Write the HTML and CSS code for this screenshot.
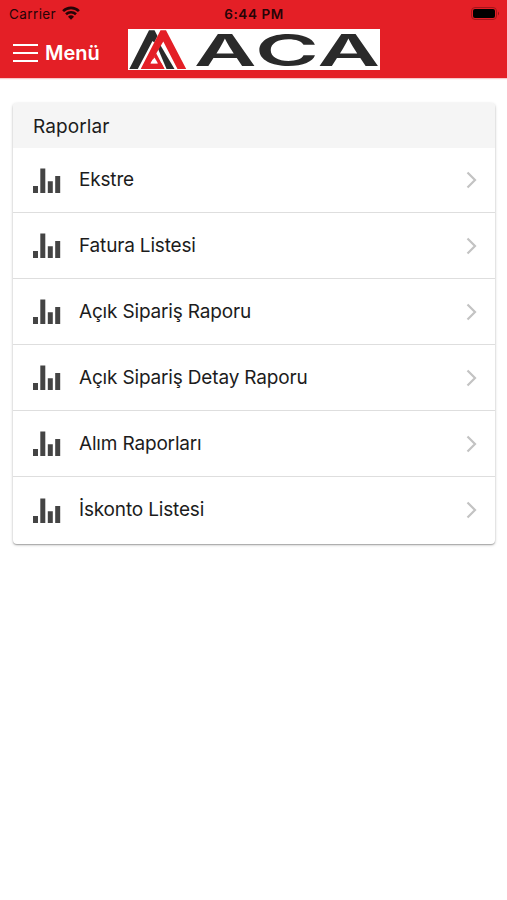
FILE: index.html
```html
<!DOCTYPE html>
<html lang="tr">
<head>
<meta charset="utf-8">
<title>Raporlar</title>
<link rel="stylesheet" href="styles.css">
</head>
<body>
<svg width="0" height="0" class="defs" aria-hidden="true">
  <symbol id="bars" viewBox="0 0 28 26"><path d="M0 18h5v7H0zM7.300 .5h5v24.500h-5zM14.800 13.200h5v11.800h-5zM22.200 8h5v17h-5z" fill="#444"/></symbol>
  <symbol id="chevron" viewBox="0 0 12 18"><path d="M1.500 1.500 9 9l-7.500 7.500" fill="none" stroke="#c3c3c3" stroke-width="2.200"/></symbol>
</svg>
<header class="topbar">
  <div class="status">
    <div class="carrier"><span>Carrier</span>
      <svg class="wifi" width="18" height="14" viewBox="0 0 18 14"><path d="M1.100 5.100a11.200 11.200 0 0 1 15.800 0M4 8.200a7.200 7.200 0 0 1 10 0" fill="none" stroke="#260407" stroke-width="2.600"/><path d="m9 13.800-3-3a4.300 4.300 0 0 1 6 0z" fill="#260407"/></svg>
    </div>
    <div class="time">6:44 PM</div>
    <svg class="battery" width="30" height="14" viewBox="0 0 30 14"><rect x=".5" y=".5" width="25" height="12" rx="3.500" fill="none" stroke="#a3151b"/><rect x="2" y="2" width="22" height="9" rx="2" fill="#000"/><path d="M27 4.500q2 2 0 4z" fill="#8c1217"/></svg>
  </div>
  <div class="nav">
    <svg class="burger" width="25" height="20" viewBox="0 0 25 20"><path d="M0 2h25M0 10h25M0 18h25" stroke="#fff" stroke-width="2.200"/></svg>
    <span class="menu">Menü</span>
    <svg class="logo" width="252" height="41" viewBox="0 0 252 41">
      <rect width="252" height="41" fill="#fff"/>
      <path d="M1.300 40 21 1.300h5.500L29.500 7 26.300 13.500 24.500 12 9.800 40z" fill="#2a2a2a"/>
      <path d="M29.500 18.500 32 15.500 46.500 40H38.500z" fill="#2a2a2a"/>
      <path d="M12.700 40 32.500 1.300H38L58.200 40h-8.700L35.300 12.500 22.500 34.300h11L36.500 40z" fill="#e41f26"/>
      <path d="m25 29.500 3-5.500 8.500 16H33z" fill="#e41f26"/>
      <path d="M26.500 28.500 22.500 34.500h7.500z" fill="#fff"/>
      <g class="wordmark">
        <text x="66" y="36.500" textLength="62.500" lengthAdjust="spacingAndGlyphs">A</text>
        <text x="127" y="36.500" textLength="64" lengthAdjust="spacingAndGlyphs">C</text>
        <text x="189.500" y="36.500" textLength="62.500" lengthAdjust="spacingAndGlyphs">A</text>
      </g>
    </svg>
  </div>
</header>
<main class="card">
  <h1 class="title">Raporlar</h1>
  <ul class="list">
    <li class="row"><svg class="bars"><use href="#bars"/></svg><span class="label">Ekstre</span><svg class="chevron"><use href="#chevron"/></svg></li>
    <li class="row"><svg class="bars"><use href="#bars"/></svg><span class="label">Fatura Listesi</span><svg class="chevron"><use href="#chevron"/></svg></li>
    <li class="row"><svg class="bars"><use href="#bars"/></svg><span class="label">Açık Sipariş Raporu</span><svg class="chevron"><use href="#chevron"/></svg></li>
    <li class="row"><svg class="bars"><use href="#bars"/></svg><span class="label">Açık Sipariş Detay Raporu</span><svg class="chevron"><use href="#chevron"/></svg></li>
    <li class="row"><svg class="bars"><use href="#bars"/></svg><span class="label">Alım Raporları</span><svg class="chevron"><use href="#chevron"/></svg></li>
    <li class="row"><svg class="bars"><use href="#bars"/></svg><span class="label">İskonto Listesi</span><svg class="chevron"><use href="#chevron"/></svg></li>
  </ul>
</main>
</body>
</html>
```
FILE: styles.css
```css
* { box-sizing: border-box; }
body { margin: 0; min-height: 100vh; background: #fff; color: #1c1c1c; font-family: Inter, "Liberation Sans", sans-serif; }
svg { display: block; flex: none; }
.defs { position: absolute; }
.topbar { height: 78px; background: #e41f26; box-shadow: 0 1px 1px rgba(228, 31, 38, .25); }
.status { display: grid; grid-template-columns: 1fr auto 1fr; align-items: center; height: 27px; padding: 0 6px 0 9px; color: #260407; font-size: 13.5px; }
.carrier { display: flex; align-items: center; gap: 6px; letter-spacing: .4px; }
.time { position: relative; left: -1px; font-weight: 600; letter-spacing: .55px; }
.wifi { margin-top: -2px; }
.battery { justify-self: end; }
.nav { display: flex; align-items: center; height: 51px; padding-left: 13px; }
.menu { width: 83px; margin-left: 7px; color: #fff; font-size: 20px; font-weight: 600; }
.logo { margin-top: -6px; overflow: visible; }
.wordmark { font-size: 44px; font-weight: 600; fill: #2a2a2a; }
.card { margin: 25px 12px 0 13px; height: 441px; background: #fff; border-radius: 4px; box-shadow: 0 1px 1px rgba(0, 0, 0, .2), 0 1px 3px rgba(0, 0, 0, .25); }
.title { margin: 0; height: 45px; padding-left: 20px; background: #f5f5f5; border-radius: 4px 4px 0 0; font-size: 19px; font-weight: 400; line-height: 47px; letter-spacing: .1px; }
.list { list-style: none; margin: 0; padding: 0; }
.row { display: flex; align-items: center; height: 66px; padding: 0 17px 0 20px; border-bottom: 1px solid #dedede; }
.row:first-child { height: 65px; }
.row:last-child { border-bottom: 0; }
.bars { width: 28px; height: 26px; margin-top: 1px; }
.label { flex: 1; margin: -1px 0 0 18px; font-size: 19px; letter-spacing: -.17px; white-space: nowrap; }
.row:first-child .label, .row:last-child .label { margin-top: -2px; }
.chevron { width: 12px; height: 18px; }
```
